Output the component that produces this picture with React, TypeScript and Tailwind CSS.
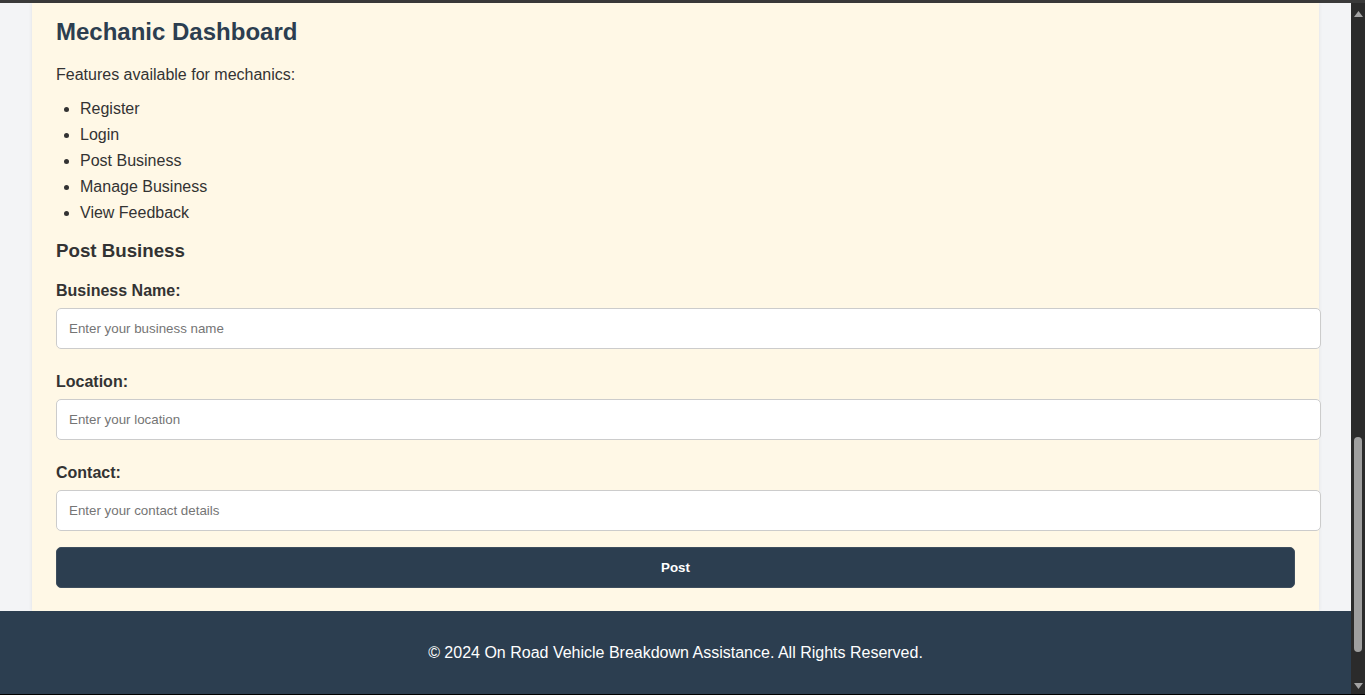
const FEATURES = ["Register", "Login", "Post Business", "Manage Business", "View Feedback"];

const FIELDS = [
  { label: "Business Name:", placeholder: "Enter your business name" },
  { label: "Location:", placeholder: "Enter your location" },
  { label: "Contact:", placeholder: "Enter your contact details" },
];

function Scrollbar() {
  return (
    <div className="flex w-[14px] flex-col items-center bg-[#2b2b2b]">
      <svg width="9" height="6" viewBox="0 0 9 6" className="mt-[8px]">
        <path d="M4.5 0 L9 6 L0 6 Z" fill="#a3a3a3" />
      </svg>
      <div className="flex-1" />
      <div className="h-[215px] w-[8px] rounded-full bg-[#9f9f9f]" />
      <div className="h-[31px]" />
      <svg width="9" height="6" viewBox="0 0 9 6" className="mb-[5px]">
        <path d="M0 0 L9 0 L4.5 6 Z" fill="#a3a3a3" />
      </svg>
    </div>
  );
}

export default function App() {
  return (
    <div className="flex h-[695px] w-[1365px] flex-col overflow-hidden font-['Liberation_Sans',Arial,sans-serif]">
      <div className="h-[3px] bg-[#3a3a3a]" />
      <div className="flex min-h-0 flex-1">
        <div className="flex min-w-0 flex-1 flex-col bg-[#f3f4f6]">
          <div className="flex min-h-0 flex-1 pl-[32px]">
            <div className="w-[1287px] bg-[#fff8e6] px-[24px] pt-[15px] shadow-[0_0_4px_rgba(0,0,0,0.08)]">
              <h1 className="text-[24px] leading-[28px] font-bold text-[#2c3e50]">Mechanic Dashboard</h1>
              <p className="mt-[20px] text-[16px] leading-[18px] text-[#333]">
                Features available for mechanics:
              </p>
              <ul className="mt-[12px] list-disc pl-[24px] text-[16px] leading-[26px] text-[#333]">
                {FEATURES.map((f) => (
                  <li key={f}>{f}</li>
                ))}
              </ul>
              <h3 className="mt-[14px] text-[18.72px] leading-[22px] font-bold text-[#333]">Post Business</h3>
              <form className="mt-[20px]" onSubmit={(e) => e.preventDefault()}>
                {FIELDS.map((field, i) => (
                  <div key={field.label} className={i > 0 ? "mt-[24px]" : ""}>
                    <label className="block text-[16px] leading-[18px] font-bold text-[#333]">
                      {field.label}
                    </label>
                    <input
                      type="text"
                      placeholder={field.placeholder}
                      className="mt-[8px] block h-[41px] w-[calc(100%+26px)] rounded-[5px] border border-[#ccc] bg-white px-[12px] text-[13.33px] text-[#333] outline-none placeholder:text-[#757575]"
                    />
                  </div>
                ))}
                <button
                  type="submit"
                  className="mt-[16px] block h-[41px] w-full rounded-[5px] border border-[#3e4e5e] bg-[#2c3e50] pt-[1px] text-[13.33px] font-bold text-white"
                >
                  Post
                </button>
              </form>
            </div>
          </div>
          <footer className="flex h-[83px] items-center justify-center bg-[#2c3e50] pt-[1px] text-[16px] text-white">
            © 2024 On Road Vehicle Breakdown Assistance. All Rights Reserved.
          </footer>
        </div>
        <Scrollbar />
      </div>
      <div className="h-[1px] bg-black" />
    </div>
  );
}
